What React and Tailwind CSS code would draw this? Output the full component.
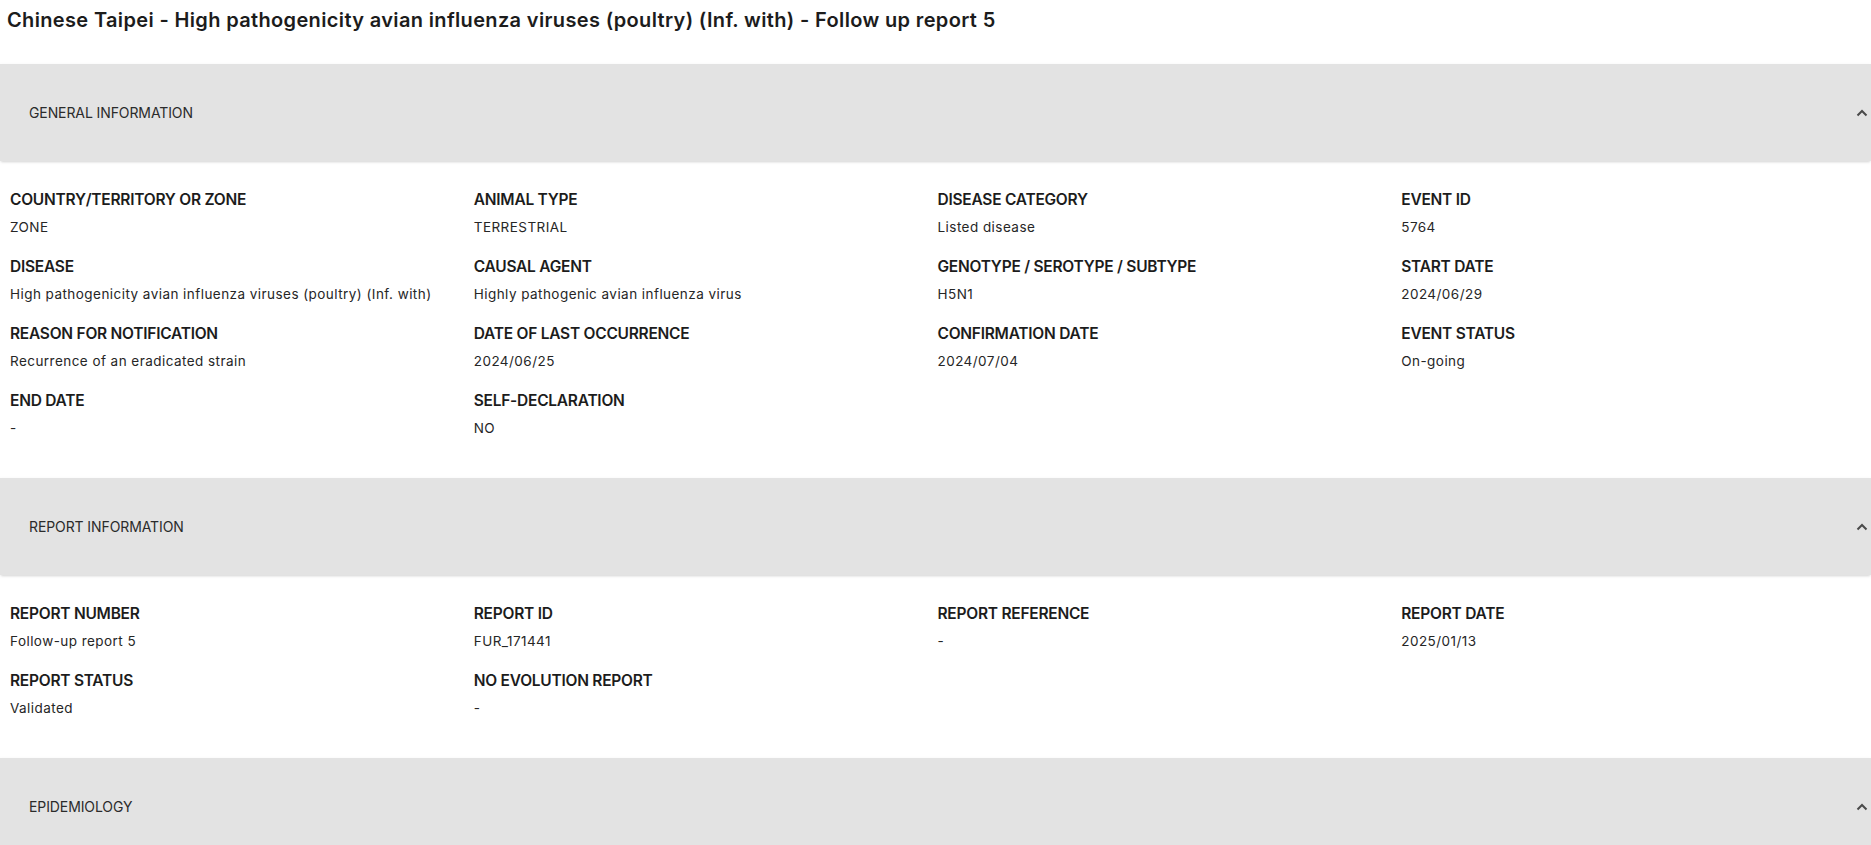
import React from "react";

const general = [
  ["COUNTRY/TERRITORY OR ZONE", "ZONE"],
  ["ANIMAL TYPE", "TERRESTRIAL"],
  ["DISEASE CATEGORY", "Listed disease"],
  ["EVENT ID", "5764"],
  ["DISEASE", "High pathogenicity avian influenza viruses (poultry) (Inf. with)"],
  ["CAUSAL AGENT", "Highly pathogenic avian influenza virus"],
  ["GENOTYPE / SEROTYPE / SUBTYPE", "H5N1"],
  ["START DATE", "2024/06/29"],
  ["REASON FOR NOTIFICATION", "Recurrence of an eradicated strain"],
  ["DATE OF LAST OCCURRENCE", "2024/06/25"],
  ["CONFIRMATION DATE", "2024/07/04"],
  ["EVENT STATUS", "On-going"],
  ["END DATE", "-"],
  ["SELF-DECLARATION", "NO"],
];

const report = [
  ["REPORT NUMBER", "Follow-up report 5"],
  ["REPORT ID", "FUR_171441"],
  ["REPORT REFERENCE", "-"],
  ["REPORT DATE", "2025/01/13"],
  ["REPORT STATUS", "Validated"],
  ["NO EVOLUTION REPORT", "-"],
];

function Chevron() {
  return (
    <svg width="12" height="8" viewBox="0 0 12 8" className="shrink-0">
      <polyline points="1.5,6.5 6,2 10.5,6.5" fill="none" stroke="#4a4a4a" strokeWidth="2" />
    </svg>
  );
}

function PanelHeader({ title }) {
  return (
    <div className="relative z-10 flex h-[97px] items-center justify-between bg-[#e3e3e3] pl-[29px] pr-[3px] shadow-[0_2px_2px_-1px_rgba(0,0,0,0.12),0_1px_4px_0_rgba(0,0,0,0.06)]">
      <span className="text-[14px] leading-5 text-[#2b2b2b] tracking-[-0.1px]">{title}</span>
      <Chevron />
    </div>
  );
}

function Field({ label, value }) {
  return (
    <div className="flex flex-col gap-[7px]">
      <div className="text-[15.5px] font-semibold leading-5 text-[#1c1c1c] tracking-[-0.25px]">{label}</div>
      <div className="text-[13.5px] leading-5 text-[#262626] tracking-[0.45px]">{value}</div>
    </div>
  );
}

function FieldGrid({ items }) {
  return (
    <div className="grid grid-cols-4 gap-y-[20px] pl-[10px] pr-[6px] pt-[29px] pb-[40px]">
      {items.map(([l, v]) => (
        <Field key={l} label={l} value={v} />
      ))}
    </div>
  );
}

export default function App() {
  return (
    <div className="min-h-screen bg-white font-['Inter',sans-serif] overflow-hidden">
      <h1 className="pl-[7px] pt-[6px] pb-[30px] text-[20px] font-semibold leading-7 text-[#1c1c1c] tracking-[0.35px]">
        Chinese Taipei - High pathogenicity avian influenza viruses (poultry) (Inf. with) - Follow up report 5
      </h1>
      <PanelHeader title="GENERAL INFORMATION" />
      <FieldGrid items={general} />
      <PanelHeader title="REPORT INFORMATION" />
      <FieldGrid items={report} />
      <PanelHeader title="EPIDEMIOLOGY" />
    </div>
  );
}
